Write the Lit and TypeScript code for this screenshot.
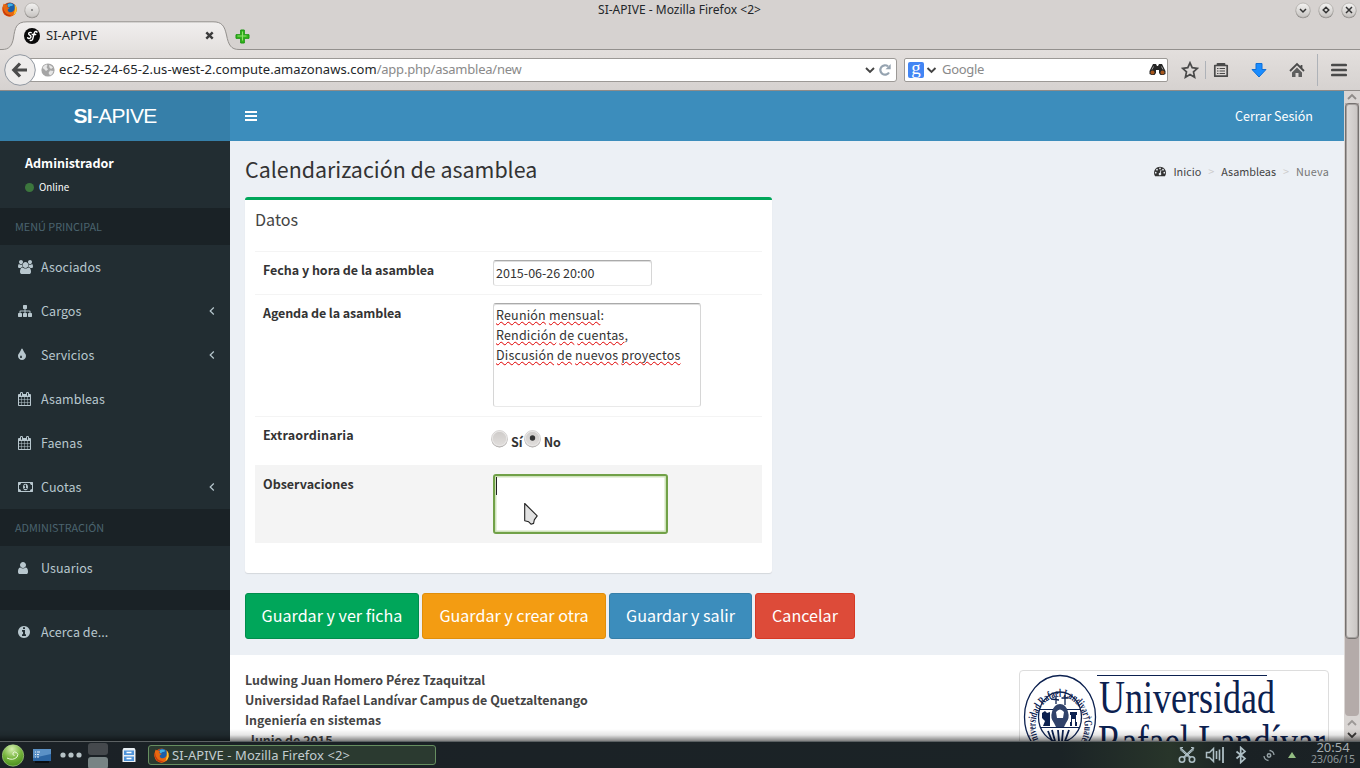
import { LitElement, html, css, svg } from "lit";
import { customElement } from "lit/decorators.js";

const GLYPHS: Record<string, [string, string]> = {
  user: ["256 0 1408 1792", "M1536 1399q0 109-62.5 187t-150.5 78h-854q-88 0-150.5-78t-62.5-187q0-85 8.5-160.5t31.5-152 58.5-131 94-89 134.5-34.5q131 128 313 128t313-128q76 0 134.5 34.5t94 89 58.5 131 31.5 152 8.5 160.5zm-256-887q0 159-112.5 271.5t-271.5 112.5-271.5-112.5-112.5-271.5 112.5-271.5 271.5-112.5 271.5 112.5 112.5 271.5z"],
  info: ["128 0 1536 1792", "M1152 1376v-160q0-14-9-23t-23-9h-96v-512q0-14-9-23t-23-9h-320q-14 0-23 9t-9 23v160q0 14 9 23t23 9h96v320h-96q-14 0-23 9t-9 23v160q0 14 9 23t23 9h448q14 0 23-9t9-23zm-128-896v-160q0-14-9-23t-23-9h-192q-14 0-23 9t-9 23v160q0 14 9 23t23 9h192q14 0 23-9t9-23zm640 416q0 209-103 385.5t-279.5 279.5-385.5 103-385.5-103-279.5-279.5-103-385.5 103-385.5 279.5-279.5 385.5-103 385.5 103 279.5 279.5 103 385.5z"],
  sitemap: ["0 0 1792 1792", "M1792 1248v320q0 40-28 68t-68 28h-320q-40 0-68-28t-28-68v-320q0-40 28-68t68-28h96v-192h-512v192h96q40 0 68 28t28 68v320q0 40-28 68t-68 28h-320q-40 0-68-28t-28-68v-320q0-40 28-68t68-28h96v-192h-512v192h96q40 0 68 28t28 68v320q0 40-28 68t-68 28h-320q-40 0-68-28t-28-68v-320q0-40 28-68t68-28h96v-192q0-52 38-90t90-38h512v-192h-96q-40 0-68-28t-28-68v-320q0-40 28-68t68-28h320q40 0 68 28t28 68v320q0 40-28 68t-68 28h-96v192h512q52 0 90 38t38 90v192h96q40 0 68 28t28 68z"],
  users: ["64 0 1920 1792", "M657 896q-162 5-265 128h-134q-82 0-138-40.5t-56-118.5q0-353 124-353 6 0 43.5 21t97.5 42.5 119 21.5q67 0 133-23-5 37-5 66 0 159 81 256zm1071 637q0 120-73 189.5t-194 69.5h-874q-121 0-194-69.5t-73-189.5q0-53 3.5-103.5t14-109 26.5-108.5 43-97.5 62-81 85.5-53.5 111.5-20q10 0 43 21.5t73 48 107 48 135 21.5 135-21.5 107-48 73-48 43-21.5q61 0 111.5 20t85.5 53.5 62 81 43 97.5 26.5 108.5 14 109 3.5 103.5zm-1024-1277q0 106-75 181t-181 75-181-75-75-181 75-181 181-75 181 75 75 181zm704 384q0 159-112.5 271.5t-271.5 112.5-271.5-112.5-112.5-271.5 112.5-271.5 271.5-112.5 271.5 112.5 112.5 271.5zm576 225q0 78-56 118.5t-138 40.5h-134q-103-123-265-128 81-97 81-256 0-29-5-66 66 23 133 23 59 0 119-21.5t97.5-42.5 43.5-21q124 0 124 353zm-128-609q0 106-75 181t-181 75-181-75-75-181 75-181 181-75 181 75 75 181z"],
  tint: ["0 0 1024 1792", "M512 1152q0-36-20-69-1-1-15.500-22.500t-25.500-38-25-44-21-50.500q-4-16-21-16t-21 16q-7 23-21 50.500t-25 44-25.500 38-15.500 22.500q-20 33-20 69 0 53 37.500 90.500t90.500 37.500 90.500-37.500 37.500-90.500zm512-128q0 212-150 362t-362 150-362-150-150-362q0-145 81-275 6-9 62.500-90.500t101-151 99.500-178 83-201.500q9-30 34-47t51-17 51.500 17 33.500 47q28 93 83 201.500t99.500 178 101 151 62.500 90.500q81 127 81 275z"],
  calendar: ["0 0 1664 1792", "M128 1664h288v-288h-288zm352 0h320v-288h-320zm-352-352h288v-320h-288zm352 0h320v-320h-320zm-352-384h288v-288h-288zm736 736h320v-288h-320zm-384-736h320v-288h-320zm768 736h288v-288h-288zm-384-352h320v-320h-320zm-352-864v-288l-32-32h-64l-32 32v288l32 32h64l32-32zm736 864h288v-320h-288zm-384-384h320v-288h-320zm384 0h288v-288h-288zm32-480v-288l-32-32h-64l-32 32v288l32 32h64l32-32zm384-64v1280q0 52-38 90t-90 38h-1408q-52 0-90-38t-38-90v-1280q0-52 38-90t90-38h128v-96q0-66 47-113t113-47h64q66 0 113 47t47 113v96h384v-96q0-66 47-113t113-47h64q66 0 113 47t47 113v96h128q52 0 90 38t38 90z"],
  money: ["0 0 1920 1792", "M768 1152h384v-96h-128v-448h-114l-148 137 77 80q42-37 55-57h2v288h-128zm512-256q0 70-21 142t-59.500 134-101.500 101-138 39-138-39-101.500-101-59.500-134-21-142 21-142 59.500-134 101.500-101 138-39 138 39 101.500 101 59.500 134 21 142zm512 256v-512q-106 0-181-75t-75-181h-1152q0 106-75 181t-181 75v512q106 0 181 75t75 181h1152q0-106 75-181t181-75zm128-832v1152q0 26-19 45t-45 19h-1792q-26 0-45-19t-19-45v-1152q0-26 19-45t45-19h1792q26 0 45 19t19 45z"],
  gauge: ["0 0 1792 1792", "M384 1152a128 128 0 1 0-256 0 128 128 0 1 0 256 0zM576 704a128 128 0 1 0-256 0 128 128 0 1 0 256 0zM1004 1185l101-382q6-26-7.500-48.500t-38.500-29.500-48 6.500-30 39.500l-101 382q-60 5-107 43.500t-63 98.500q-20 77 20 146t117 89 146-20 89-117q16-60-6-117t-72-91zM1664 1152a128 128 0 1 0-256 0 128 128 0 1 0 256 0zM1024 512a128 128 0 1 0-256 0 128 128 0 1 0 256 0zM1472 704a128 128 0 1 0-256 0 128 128 0 1 0 256 0zM1792 1152q0 261-141 483-19 29-54 29h-1402q-35 0-54-29-141-221-141-483 0-182 71-348t191-286 286-191 348-71 348 71 286 191 191 286 71 348z"],
};

const glyph = (name: string) => {
  const [box, d] = GLYPHS[name];
  const w = Number(box.split(" ")[2]) / 128;
  return html`<svg class="glyph" width=${w} height="14" viewBox=${box}><path fill="currentColor" fill-rule="evenodd" d=${d} /></svg>`;
};

const firefox = (size: number) => html`<svg width=${size} height=${size} viewBox="0 0 16 16">
  <circle cx="8" cy="8" r="7.500" fill="#d8480f" />
  <circle cx="8.800" cy="6.600" r="5.800" fill="#1c5fa8" />
  <path d="M6 2.500q3-2 6 .5-1 1.500-3 1.200-1 1.500-2.500 1z" fill="#3fb2e6" />
  <path d="M1 4q.3-1.500 1-2.500.5 1 1.500 1.300Q5 2.500 6.500 3.200 5.200 4.500 6 5.500l2 .6q-.2 1-1.800 1.600-.6 2 1.300 3 2.500 1 5-1.500Q15 6.500 13.500 2.500 16 5 15.600 9 14.600 15 8 15.600 1.500 15 .6 9 .3 6 1 4z" fill="#e8670f" />
  <path d="M13.500 2.500Q16 5 15.600 9 15 12.500 12.300 14.200 14.500 9 13.500 2.500z" fill="#fdc52c" />
  <path d="M1 4.500Q1 9 4 12q3 2.500 6.500 1.500Q7.500 16.500 3.500 13.500 0 10 1 4.500z" fill="#c4340d" />
</svg>`;

const round = (inner: unknown) => html`<svg width="16" height="17" viewBox="0 0 16 17">
  <defs><linearGradient id="rb" x1="0" y1="0" x2="0" y2="1"><stop offset="0" stop-color="#f4f3f2" /><stop offset="1" stop-color="#c6c3c0" /></linearGradient></defs>
  <circle cx="8" cy="9" r="7.300" fill="#8b8886" /><circle cx="8" cy="8.200" r="7.200" fill="url(#rb)" stroke="#aaa7a4" stroke-width=".7" />${inner}</svg>`;

@customElement("browser-chrome")
class BrowserChrome extends LitElement {
  static styles = css`
    :host { display: flex; flex-direction: column; height: 91px; font: 13px/18px "Noto Sans", sans-serif; color: #232629; background: #d6d2d0; }
    svg { display: block; flex: none; }
    .title { display: flex; align-items: center; height: 20px; padding: 0 3px 0 2px; font-size: 12px; }
    .side { display: flex; width: 96px; gap: 7px; }
    .side.end { justify-content: flex-end; gap: 7px; }
    .name { flex: 1; text-align: center; letter-spacing: .02px; }
    .tabs { display: flex; height: 30px; position: relative; }
    .edge { position: absolute; left: 0; top: 0; }
    .tab { display: flex; align-items: center; position: relative; width: 228px; padding: 0 0 0 24px; box-sizing: border-box; }
    .tab svg { margin-top: 1px; }
    .tab .label { margin-left: 6px; width: 159px; }
    .plus { position: relative; margin: 9px 0 0 7px; }
    .bar { display: flex; align-items: center; position: relative; height: 41px; box-sizing: border-box; padding: 0 11px 1px 0; background: linear-gradient(#e3dfdd, #d6d2d0); border-bottom: 1px solid #8f8b88; }
    .back { position: relative; margin-left: 4px; }
    .url { display: flex; align-items: center; box-sizing: border-box; width: 870px; height: 24px; margin-left: -9px; padding: 0 4px 0 13px; background: #fff; border: 1px solid #9c9996; border-radius: 0 3px 3px 0; }
    .host { margin-left: 4px; letter-spacing: .05px; white-space: nowrap; }
    .host, .path, .hint { padding-bottom: 2px; }
    .path { flex: 1; color: #8a8a8a; letter-spacing: -.22px; }
    .search { display: flex; align-items: center; box-sizing: border-box; width: 264px; height: 24px; margin-left: 7px; padding: 0 1px 0 3px; background: #fff; border: 1px solid #9c9996; border-radius: 2px; }
    .g { width: 16px; height: 16px; border-radius: 2px; background: #4285f4; color: #fff; font: 19px/11px "Liberation Serif", serif; text-align: center; }
    .hint { flex: 1; margin-left: 3px; color: #8a8a8a; letter-spacing: -.3px; }
    .icons { display: flex; align-items: center; flex: 1; margin-left: 13px; }
    .rule { width: 1px; height: 18px; background: #aeb2b8; }
    .rule.tall { height: 32px; }
  `;
  render() {
    return html`
      <div class="title">
        <div class="side">${firefox(15)}${round(svg`<circle cx="8" cy="8" r=".8" fill="#333" />`)}</div>
        <div class="name">SI-APIVE - Mozilla Firefox &lt;2&gt;</div>
        <div class="side end">
          ${round(svg`<path d="M5 7l3 3 3-3" fill="none" stroke="#333" stroke-width="1.500" />`)}
          ${round(svg`<path d="M8 5.200L10.800 8 8 10.800 5.200 8z" fill="none" stroke="#333" stroke-width="1.500" />`)}
          ${round(svg`<path d="M5 5l6 6M11 5l-6 6" stroke="#333" stroke-width="1.500" />`)}
        </div>
      </div>
      <div class="tabs">
        <svg class="edge" width="1360" height="30" viewBox="0 0 1360 30">
          <defs><linearGradient id="tg" x1="0" y1="0" x2="0" y2="1"><stop offset="0" stop-color="#f1efee" /><stop offset="1" stop-color="#e4e1df" /></linearGradient></defs>
          <path d="M0 29.500H2C9 29.500 12 26 13.500 18 15 8 16 1.800 27 1.800H213C222 1.800 224.500 6 226.500 15 228.500 25 231 29.500 239 29.500H1360V30H0z" fill="url(#tg)" />
          <path d="M0 29.500H2C9 29.500 12 26 13.500 18 15 8 16 1.800 27 1.800H213C222 1.800 224.500 6 226.500 15 228.500 25 231 29.500 239 29.500H1360" fill="none" stroke="#93908d" />
        </svg>
        <div class="tab">
          <svg width="16" height="16" viewBox="0 0 16 16"><circle cx="8" cy="8" r="8" fill="#0a0a0a" /><path d="M7.200 4.700C5.800 3.900 4.300 4.900 4.700 6.100 5 7.200 7 7.200 7 8.800 7 10.400 4.600 11 3.600 9.700M13 4.200C12.600 2.900 10.800 3.100 10.200 5.200L8.900 10.400C8.500 12.200 7.400 13 6.200 12.300M8.300 6.500h3.400" fill="none" stroke="#fff" stroke-width="1.400" stroke-linecap="round" /></svg>
          <span class="label">SI-APIVE</span>
          <svg width="9" height="9" viewBox="0 0 9 9"><path d="M1.300 1.300l6.400 6.400M7.700 1.300L1.300 7.700" stroke="#3b3b3b" stroke-width="2.400" /></svg>
        </div>
        <svg class="plus" width="15" height="15" viewBox="0 0 15 15"><path d="M5.700 1h3.600v4.700H14v3.600H9.300V14H5.700V9.300H1V5.700h4.700z" fill="#35b71b" stroke="#1a9410" stroke-linejoin="round" /><path d="M7.500 2.500v9M2.500 7h9" stroke="#8fe070" /></svg>
      </div>
      <div class="bar">
        <svg class="back" width="32" height="32" viewBox="0 0 32 32"><circle cx="16" cy="16" r="15.300" fill="#eeeceb" stroke="#9097a0" /><path d="M16 9.500L9.800 16l6.200 6.500M11 16H23" fill="none" stroke="#4b4b4b" stroke-width="3.200" /></svg>
        <div class="url">
          <svg width="14" height="14" viewBox="0 0 14 14"><circle cx="7" cy="7" r="6.600" fill="#a5a5a5" /><path d="M1.500 5Q3 1.500 6 1.500 7 3 5.500 4L7 6.500 5 8 3 6zM8 2q2 0 4 2.500L10 6 8.500 4.500zM9 7.500l3.500.500Q12 11 9 12.500L7.500 10z" fill="#e6e6e6" /></svg>
          <span class="host">ec2-52-24-65-2.us-west-2.compute.amazonaws.com</span><span class="path">/app.php/asamblea/new</span>
          <svg width="10" height="8" viewBox="0 0 10 8"><path d="M1 2l4 4 4-4" fill="none" stroke="#444" stroke-width="1.900" /></svg>
          <svg width="17" height="14" viewBox="0 0 17 14"><path d="M14 9.500A4.700 4.700 0 1 1 13 3.300" fill="none" stroke="#95a3b0" stroke-width="2.200" /><path d="M10.500 6.200h5.200V1z" fill="#95a3b0" /></svg>
        </div>
        <div class="search">
          <div class="g">g</div>
          <svg width="15" height="8" viewBox="0 0 15 8"><path d="M3.500 2l4 4 4-4" fill="none" stroke="#444" stroke-width="1.900" /></svg>
          <span class="hint">Google</span>
          <svg width="17" height="13" viewBox="0 0 17 13"><path d="M4 1h3l1 2h1l1-2h3l3.500 7v3l-2 1h-3L10 10V7H7v3l-1.500 2h-3l-2-1V8z" fill="#262626" /><circle cx="3.500" cy="9.500" r="2" fill="#a5561c" /><circle cx="13.500" cy="9.500" r="2" fill="#a5561c" /><path d="M4.500 3.500L3 6.500M12.500 3.500l1.500 3" stroke="#999" /></svg>
        </div>
        <div class="icons">
          <svg width="18" height="18" viewBox="0 0 18 18"><path d="M9 1.800l2.200 4.900 5.200.6-3.900 3.600 1.100 5.300L9 13.500l-4.600 2.700 1.100-5.300L1.600 7.300l5.200-.6z" fill="none" stroke="#4a4a4a" stroke-width="1.700" /></svg>
          <svg width="6" height="1"></svg><div class="rule"></div><svg width="7" height="1"></svg>
          <svg width="16" height="16" viewBox="0 0 16 16"><path d="M4.500 3.500V1.800h7v1.700M1.800 3.500h12.400v10.700H1.800z" fill="none" stroke="#4a4a4a" stroke-width="1.700" stroke-linejoin="round" /><path d="M4 6.500h1.500M6.500 6.500h5.500M4 9h1.500M6.500 9h5.500M4 11.500h1.500M6.500 11.500h5.500" stroke="#4a4a4a" stroke-width="1.200" /></svg>
          <svg width="22" height="1"></svg>
          <svg width="16" height="16" viewBox="0 0 16 16"><path d="M5 1.500h6v6h4L8 15 1 7.500h4z" fill="#198cff" stroke="#0f6fd6" stroke-linejoin="round" /></svg>
          <svg width="22" height="1"></svg>
          <svg width="16" height="16" viewBox="0 0 16 16"><path d="M1 9l7-7 7 7M12.500 3v4" fill="none" stroke="#4a4a4a" stroke-width="1.800" /><path d="M8 5.500l5 5v4.500H9.500v-4h-3v4H3v-4.500z" fill="#5e5e5e" /></svg>
          <svg width="12" height="1"></svg><div class="rule tall"></div><svg width="13" height="1"></svg>
          <svg width="16" height="14" viewBox="0 0 16 14"><path d="M1.300 2h13.400M1.300 7h13.400M1.300 12h13.400" stroke="#4a4a4a" stroke-width="2.700" stroke-linecap="round" /></svg>
        </div>
      </div>`;
  }
}

type Entry = { icon?: string; text?: string; more?: boolean; header?: string; gap?: boolean };
const MENU: Entry[] = [
  { header: "MENÚ PRINCIPAL" },
  { icon: "users", text: "Asociados" },
  { icon: "sitemap", text: "Cargos", more: true },
  { icon: "tint", text: "Servicios", more: true },
  { icon: "calendar", text: "Asambleas" },
  { icon: "calendar", text: "Faenas" },
  { icon: "money", text: "Cuotas", more: true },
  { header: "ADMINISTRACIÓN" },
  { icon: "user", text: "Usuarios" },
  { gap: true },
  { icon: "info", text: "Acerca de..." },
];

@customElement("side-menu")
class SideMenu extends LitElement {
  static styles = css`
    :host { display: block; width: 230px; flex: none; background: #222d32; color: #b8c7ce; font: 12.530px/20px "Noto Sans CJK SC", sans-serif; }
    .logo { height: 50px; background: #367fa9; color: #fff; text-align: center; font: 21px/50px "Liberation Sans", sans-serif; letter-spacing: -.7px; }
    .user { height: 67px; box-sizing: border-box; padding: 12px 0 0 25px; color: #fff; }
    .user b { display: block; }
    .state { display: flex; align-items: center; gap: 5px; margin-top: 4px; font-size: 9.800px; }
    .dot { width: 9px; height: 9px; border-radius: 50%; background: #3c763d; }
    .header { height: 37px; padding-left: 15px; background: #1a2226; color: #4b646f; font-size: 10.850px; line-height: 37px; }
    .gap { height: 20px; background: #1a2226; }
    .item { display: flex; align-items: center; height: 44px; padding: 0 15px 0 18px; letter-spacing: .06px; }
    .pic { width: 23px; display: flex; }
    .text { flex: 1; }
  `;
  render() {
    return html`
      <div class="logo"><b>SI</b>-APIVE</div>
      <div class="user"><b>Administrador</b><div class="state"><i class="dot"></i>Online</div></div>
      ${MENU.map((m) => m.header ? html`<div class="header">${m.header}</div>` : m.gap ? html`<div class="gap"></div>` : html`
        <div class="item"><span class="pic">${glyph(m.icon!)}</span><span class="text">${m.text}</span>
          ${m.more ? html`<svg width="6" height="10" viewBox="0 0 6 10"><path d="M4.800 1.500L1.200 5l3.600 3.500" fill="none" stroke="#b8c7ce" stroke-width="1.200" /></svg>` : ""}
        </div>`)}`;
  }
}

@customElement("meeting-form")
class MeetingForm extends LitElement {
  static styles = css`
    :host { display: block; box-sizing: border-box; width: 527px; height: 376px; padding: 0 10px; background: #fff; border-top: 3px solid #00a65a; border-radius: 3px; box-shadow: 0 1px 1px rgba(0,0,0,.1); color: #333; }
    .head { height: 51px; font-size: 16.100px; line-height: 38px; color: #444; }
    .row { display: grid; grid-template-columns: 230px 1fr; padding: 8px; border-top: 1px solid #f4f4f4; box-sizing: border-box; }
    .r1 { height: 43px; } .r2 { height: 122px; } .r3 { height: 49px; } .r4 { height: 78px; background: #f4f4f4; position: relative; }
    .label { font-weight: 700; }
    .r1 .label { letter-spacing: -.04px; } .r2 .label { letter-spacing: -.12px; } .r3 .label { letter-spacing: .16px; }
    .field { box-sizing: border-box; background: #fff; border: 1px solid #d6d6d6; border-top-color: #aaa; box-shadow: inset 0 1px 0 #dedede; border-bottom-color: #e9e9e9; border-radius: 3px; padding: 0 2px; }
    .date { width: 159px; height: 26px; line-height: 24px; }
    .agenda { width: 208px; height: 104px; padding-top: 1px; letter-spacing: .18px; }
    .agenda u { text-decoration: underline wavy #e00000 1px; text-underline-offset: 1px; text-decoration-skip-ink: none; }
    .notes { width: 175px; height: 60px; padding: 0 1px; border: 2px solid #71a148; box-shadow: inset 0 0 0 1.500px #cfe3bb; }
    .caret { display: block; width: 1px; height: 18px; background: #222; margin: 1px 0 0 0; }
    .radios { display: flex; font-weight: 700; margin: 5px 0 0 -2px; height: 22px; }
    .radios span { margin: 2px 1px 0 3px; }
    .radios .no { margin-left: 3px; }
    .pointer { position: absolute; left: 268px; top: 36px; }
  `;
  words(line: string) {
    return line.split(/([ :,])/).map((w) => (/^[ :,]?$/.test(w) ? w : html`<u>${w}</u>`));
  }
  render() {
    const dial = (on: boolean) => html`<svg width="17" height="18" viewBox="0 0 17 18"><defs><linearGradient id="dg" x1="0" y1="0" x2="0" y2="1"><stop offset="0" stop-color="#cfccca" /><stop offset="1" stop-color="#e0dddb" /></linearGradient></defs><circle cx="8.500" cy="9.400" r="8" fill="#a5a2a0" /><circle cx="8.500" cy="8.500" r="8" fill="#ecebea" stroke="#c4c1bf" stroke-width=".6" /><circle cx="8.500" cy="8.500" r="6.800" fill="url(#dg)" />${on ? svg`<circle cx="8.500" cy="8" r="2.700" fill="#333" />` : ""}</svg>`;
    return html`
      <div class="head">Datos</div>
      <div class="row r1"><div class="label">Fecha y hora de la asamblea</div><div class="field date">2015-06-26 20:00</div></div>
      <div class="row r2"><div class="label">Agenda de la asamblea</div><div class="field agenda">
        ${["Reunión mensual:", "Rendición de cuentas,", "Discusión de nuevos proyectos"].map((l) => html`<div>${this.words(l)}</div>`)}</div></div>
      <div class="row r3"><div class="label">Extraordinaria</div><div class="radios">${dial(false)}<span>Sí</span>${dial(true)}<span class="no">No</span></div></div>
      <div class="row r4"><div class="label">Observaciones</div><div class="field notes"><i class="caret"></i></div>
        <svg class="pointer" width="16" height="24" viewBox="0 0 16 24"><path d="M1.700 1.500v17.200l4 1.100 2.300 2.400 2.600-.8.700-3.500 2.900-4z" fill="#e2e2e2" stroke="#222" stroke-width="1.100" stroke-linejoin="round" /></svg>
      </div>`;
  }
}

@customElement("university-badge")
class UniversityBadge extends LitElement {
  static styles = css`
    :host { display: block; box-sizing: border-box; width: 310px; height: 110px; border: 1px solid #ddd; border-radius: 4px; background: #fff; overflow: hidden; font-weight: 400; }
    svg { display: block; }
    .serif { font-family: "Liberation Serif", serif; }
  `;
  render() {
    return html`<svg width="308" height="108" viewBox="1020 671 308 108" fill="#0c2150">
      <path d="M1097 675.500h170" stroke="#0c2150" stroke-width="1.200" />
      <text class="serif" x="1099" y="713" font-size="47" textLength="176" lengthAdjust="spacingAndGlyphs">Universidad</text>
      <text class="serif" x="1098" y="757" font-size="47" textLength="227" lengthAdjust="spacingAndGlyphs">Rafael Landívar</text>
      <g fill="none" stroke="#0c2150"><ellipse cx="1060" cy="717" rx="35.500" ry="41.500" stroke-width="1.300" /><ellipse cx="1060" cy="717" rx="21.500" ry="25" stroke-width="1.300" />
        <path d="M1056 696v8M1065 695v10M1061.500 698h7M1051 699l8 1" stroke-width="1.300" /></g>
      <defs><path id="ring" d="M1041 744A24.500 29 0 1 1 1079 744" /></defs>
      <text class="serif" font-size="11.500" font-weight="700"><textPath href="#ring" textLength="124" lengthAdjust="spacingAndGlyphs">Universidad Rafael Landivar†Guatem</textPath></text>
      <path d="M1040 709.500h13M1067 709.500h13M1040 727.500h40" stroke="#0c2150" />
      <path d="M1052 712q2-8 8-8t8 8q2 6-2 11l-2 4h-8l-2-4q-4-5-2-11z" opacity=".85" /><path d="M1056 712q4-5 8 0l-1 6h-6z" fill="#fff" /><path d="M1042 713l3-2 2 2 3-1v14h-7l2-5-3-3zM1070 712h7v3h-1v7h1v4h-2v-7h-3v7h-2v-4h1v-7h-1z" />
      <path d="M1052 730l3 11M1058 730l1 11M1063 730l-1 11M1069 730l-4 11M1048 731l4 10" stroke="#0c2150" stroke-width="1.800" />
    </svg>`;
  }
}

@customElement("web-page")
class WebPage extends LitElement {
  static styles = css`
    :host { display: flex; flex: 1; min-height: 0; overflow: hidden; font: 12.530px/20px "Noto Sans CJK SC", sans-serif; color: #333; }
    .main { flex: 1; background: #fff; min-width: 0; }
    .nav { display: flex; justify-content: space-between; align-items: center; height: 50px; padding: 0 31px 0 15px; background: #3c8dbc; color: #fff; }
    .content { display: block; height: 514px; box-sizing: border-box; padding: 15px 15px 0; background: #ecf0f5; }
    .top { display: flex; justify-content: space-between; height: 41px; }
    .h1 { font-size: 21.420px; line-height: 26px; }
    .crumbs { display: flex; align-items: center; height: 20px; margin-top: 5px; font-size: 10.830px; color: #444; }
    .crumbs .sep { color: #ccc; width: 20px; text-align: center; }
    .crumbs .here { color: #777; letter-spacing: .2px; }
    .crumbs .ic { display: flex; margin-right: 7px; }
    .buttons { display: flex; gap: 3px; margin-top: 20px; }
    .btn { box-sizing: border-box; height: 46px; border: 1px solid; border-radius: 3px; color: #fff; font-size: 16.120px; line-height: 42px; text-align: center; white-space: nowrap; }
    .green { width: 174px; background: #00a65a; border-color: #008d4c; }
    .orange { width: 184px; background: #f39c12; border-color: #e08e0b; }
    .blue { width: 143px; background: #3c8dbc; border-color: #367fa9; }
    .red { width: 100px; background: #dd4b39; border-color: #d73925; }
    .footer { display: flex; justify-content: space-between; padding: 15px; color: #444; font-weight: 700; font-size: 12.430px; }
    .scroll { width: 16px; background: #d9d5d3; flex: none; box-sizing: border-box; display: flex; flex-direction: column; align-items: center; }
    .arrow { display: block; flex: none; }
    .track { width: 14px; height: 613px; background: #b4aba9; border-radius: 0 0 4px 4px; }
    .thumb { box-sizing: border-box; width: 14px; height: 536px; border: 1px solid #75716f; border-radius: 4px; background: linear-gradient(90deg, #dedbd9, #c9c5c3); box-shadow: inset 0 0 0 1px #a5a19f; }
  `;
  arrow(d: string, c: string, h: number) {
    return html`<svg class="arrow" width="12" height=${h} viewBox=${`0 0 12 ${h}`}><path d=${d} fill="none" stroke=${c} stroke-width="1.800" /></svg>`;
  }
  render() {
    return html`
      <side-menu></side-menu>
      <div class="main">
        <div class="nav">
          <svg width="12" height="10" viewBox="0 0 12 10"><path d="M0 1h12M0 5h12M0 9h12" stroke="#fff" stroke-width="2" /></svg>
          <span>Cerrar Sesión</span>
        </div>
        <div class="content">
          <div class="top">
            <div class="h1">Calendarización de asamblea</div>
            <div class="crumbs"><span class="ic"><svg width="12" height="12" viewBox="0 0 1792 1792"><path fill="#333" fill-rule="evenodd" d=${GLYPHS.gauge[1]} /></svg></span>Inicio<span class="sep">&gt;</span>Asambleas<span class="sep">&gt;</span><span class="here">Nueva</span></div>
          </div>
          <meeting-form></meeting-form>
          <div class="buttons">
            <div class="btn green">Guardar y ver ficha</div><div class="btn orange">Guardar y crear otra</div><div class="btn blue">Guardar y salir</div><div class="btn red">Cancelar</div>
          </div>
        </div>
        <div class="footer">
          <div><div>Ludwing Juan Homero Pérez Tzaquitzal</div><div>Universidad Rafael Landívar Campus de Quetzaltenango</div><div>Ingeniería en sistemas</div><div>&nbsp;Junio de 2015</div></div>
          <university-badge></university-badge>
        </div>
      </div>
      <div class="scroll">
        ${this.arrow("M2 8l4-4 4 4", "#8f8b89", 12)}
        <div class="track"><div class="thumb"></div></div>
        ${this.arrow("M2 9l4-4 4 4", "#9c9896", 12)}
        ${this.arrow("M2 5l4 4 4-4", "#3c3a39", 13)}
      </div>`;
  }
}

@customElement("task-bar")
class TaskBar extends LitElement {
  static styles = css`
    :host { display: flex; position: relative; align-items: center; box-sizing: border-box; height: 27px; padding: 0 4px 0 2px; border-top: 1px solid #5c6163; background: linear-gradient(90deg, #1b2126 0%, #1b2326 78%, #28352a 86%, #1a2124 91%, #1b2225 100%); color: #c3cdd0; font: 13px/18px "Noto Sans", sans-serif; }
    :host::before { content: ""; position: absolute; left: 0; right: 0; top: -13px; height: 12px; background: linear-gradient(rgba(0,0,0,0), rgba(0,0,0,.1) 50%, rgba(0,0,0,.5)); }
    svg { display: block; flex: none; }
    .pager { display: flex; flex-direction: column; gap: 2px; margin: 2px 14px 0 6px; }
    .desk { width: 20px; height: 12px; border-radius: 3px; background: #45494d; }
    .desk.on { background: #788485; }
    .task { display: flex; align-items: center; gap: 3px; box-sizing: border-box; width: 288px; height: 20px; margin: 0 0 0 12px; padding-left: 5px; border: 1px solid #668e60; border-radius: 3px; background: #2b3a30; letter-spacing: .07px; }
    .tray { display: flex; align-items: center; margin-left: auto; color: #aebfc5; }
    .clock { width: 46px; margin: -3px 0 0 14px; color: #a4acaf; text-align: center; line-height: 12px; white-space: nowrap; }
    .date { font-size: 10.500px; line-height: 13px; color: #8e9699; }
  `;
  render() {
    return html`
      <svg width="23" height="24" viewBox="0 0 23 24"><defs><radialGradient id="sg" cx=".45" cy=".2" r=".9"><stop offset="0" stop-color="#d6efb0" /><stop offset=".5" stop-color="#75b43c" /><stop offset="1" stop-color="#3f8416" /></radialGradient></defs><circle cx="11" cy="12.500" r="10.700" fill="url(#sg)" stroke="#b9dd95" stroke-width=".6" /><path d="M5 15q6 3 10-1 2-3-.5-4.500t-3.500.5 1.500 2.500" fill="none" stroke="#eaf7d8" stroke-width="1" /></svg>
      <svg width="35" height="18" viewBox="0 0 35 18"><path d="M8 3h18v12H8z" fill="#2c66a4" /><path d="M8 3h18v5L8 12z" fill="#5b91c6" /><path d="M10 6h1M10 8.500h1M10 11h1M12 6h3M12 8.500h2M12 11h2" stroke="#e6eef6" /><path d="M10 15h14v2H10z" fill="#0a0d10" /></svg>
      <svg width="22" height="6" viewBox="0 0 22 6"><circle cx="3" cy="3" r="2.600" fill="#b7c3c7" /><circle cx="11" cy="3" r="2.600" fill="#b7c3c7" /><circle cx="19" cy="3" r="2.600" fill="#b7c3c7" /></svg>
      <div class="pager"><div class="desk"></div><div class="desk on"></div></div>
      <svg width="14" height="16" viewBox="0 0 14 16"><path d="M1.500 1h11l1 2v12h-13V3z" fill="#e9eff4" /><path d="M2 3.500h10v4.500H2zM2 9.500h10V14H2z" fill="#4f93d9" /><path d="M4.500 5.500h5M4.500 11.500h5" stroke="#fff" stroke-width="1.500" /></svg>
      <div class="task">${firefox(15)}<span>SI-APIVE - Mozilla Firefox &lt;2&gt;</span></div>
      <div class="tray">
        <svg width="18" height="18" viewBox="0 0 18 18" fill="none" stroke="currentColor" stroke-width="1.600"><path d="M2 1.500l10.500 10M16 1.500l-10.500 10" /><path d="M2 3.500l9 8M16 3.500l-9 8M3 1.500h2M13 1.500h2" stroke-width="1" /><circle cx="4" cy="13.500" r="2.700" /><circle cx="14" cy="13.500" r="2.700" /></svg>
        <svg width="39" height="18" viewBox="0 0 39 18" fill="none" stroke="currentColor"><path d="M10.500 6.500h3l4-4v13l-4-4h-3z" stroke-width="1.500" /><path d="M20.500 5v8M23.500 3.500v11" stroke-width="1.600" /><path d="M27 1v16" stroke-width="1.800" /></svg>
        <svg width="14" height="18" viewBox="0 0 14 18" fill="none" stroke="currentColor" stroke-width="1.700"><path d="M1.500 5.500l8.500 7L5.700 16.500v-15L10 5.500l-8.500 7" /></svg>
        <svg width="38" height="18" viewBox="0 0 38 18" fill="none" stroke="#95a1a5" stroke-width="1.500"><circle cx="20" cy="9.500" r="1.700" /><path d="M20.500 4.500A5 5 0 0 1 25 9M19.500 14.500A5 5 0 0 1 15 10" stroke-width="1.300" /></svg>
        <svg width="9" height="6" viewBox="0 0 9 6"><path d="M5 0l4 6H1z" fill="#93bd82" /></svg>
        <div class="clock">20:54<div class="date">23/06/15</div></div>
      </div>`;
  }
}

@customElement("app-root")
export class AppRoot extends LitElement {
  static styles = css`
    :host { display: flex; flex-direction: column; width: 1360px; height: 768px; overflow: hidden; }
    browser-chrome, task-bar { flex: none; }
    .tray { gap: 0; }
  `;
  render() {
    return html`<browser-chrome></browser-chrome><web-page></web-page><task-bar></task-bar>`;
  }
}
